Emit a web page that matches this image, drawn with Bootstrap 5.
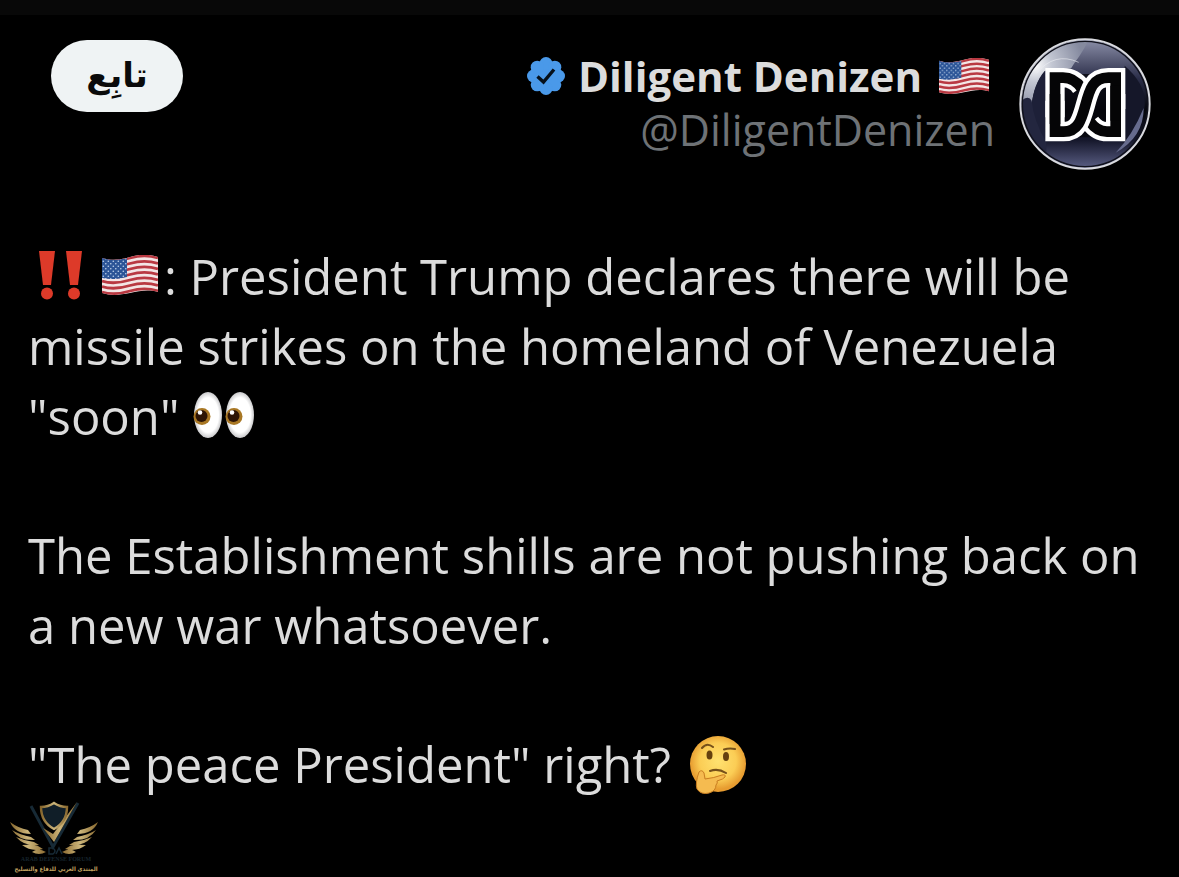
<!DOCTYPE html>
<html lang="en">
<head>
<meta charset="utf-8">
<meta name="viewport" content="width=device-width, initial-scale=1">
<title>Diligent Denizen</title>
<link href="https://cdn.jsdelivr.net/npm/bootstrap@5.3.0/dist/css/bootstrap.min.css" rel="stylesheet">
<style>
  body { background: #000; color: #dcdcdc; font-family: "Open Sans", "Noto Sans", sans-serif; }
  .top-strip { height: 15px; background: #080808; }
  .post-header { padding: 23px 28px 0 51px; }
  .follow-btn { width: 132px; height: 72px; margin-top: 2px; padding: 0 0 2px; border: 0; border-radius: 36px; background: #eff3f4; color: #0a0a0a; font: bold 34px/60px "DejaVu Sans", sans-serif; }
  .author { color: #dcdcdc; }
  .author-name { font-size: 42px; font-weight: 700; line-height: 54px; gap: 12px; padding-right: 6px; margin-top: 11px; }
  .author-handle { font-size: 43px; line-height: 54px; color: #6e7276; }
  .avatar { width: 132px; height: 132px; }
  .verified { width: 40px; height: 40px; }
  .flag-name { width: 50px; height: 36px; margin-left: 5px; }
  .post-body { padding: 71px 28px 0; font-size: 49px; line-height: 70px; }
  .post-body p { margin-bottom: 69px; }
  .post-body p:last-child { margin-bottom: 0; }
  .emo { display: inline-block; }
  .bangs { width: 46px; height: 50px; margin: 0 19px 0 9px; vertical-align: -5px; }
  .flag-text { width: 56px; height: 40px; vertical-align: 0; margin-right: 6px; }
  .eyes { width: 64px; height: 48px; vertical-align: -4px; }
  .think { width: 60px; height: 60px; margin-left: 4px; vertical-align: -12px; }
  .forum { width: 92px; margin-left: 10px; margin-top: 2px; }
  .forum-emblem { width: 92px; height: 54px; }
  .forum-en { font: bold 6px/8px "Liberation Serif", serif; color: #16242d; white-space: nowrap; }
  .forum-ar { font: bold 6px/12px "DejaVu Sans Condensed", "DejaVu Sans", sans-serif; color: #c4a562; white-space: nowrap; }
</style>
</head>
<body>
<svg class="position-absolute" width="0" height="0" aria-hidden="true">
  <defs>
    <pattern id="stars" width="5" height="5" patternUnits="userSpaceOnUse"><rect width="5" height="5" fill="#2c5597"/><circle cx="1.3" cy="1.3" r=".8" fill="#c3d5ec"/><circle cx="3.8" cy="3.8" r=".8" fill="#c3d5ec"/></pattern>
    <clipPath id="wave"><path d="M0 3C9 6 18 5 28 2S47-1 56 2V37C46 34 38 36 28 38S9 41 0 38Z"/></clipPath>
  </defs>
  <symbol id="us-flag" viewBox="0 0 56 40" preserveAspectRatio="none">
    <g clip-path="url(#wave)">
      <path d="M0-4H56V44H0Z" fill="#f3e5e5"/>
      <g fill="none" stroke="#b93942" stroke-width="2.8">
        <path d="M0 4C9 7 18 6 28 3S47 0 56 3"/><path d="M0 9.5C9 12.500 18 11.500 28 8.500S47 5.500 56 8.500"/><path d="M0 15C9 18 18 17 28 14S47 11 56 14"/><path d="M0 20.500C9 23.500 18 22.500 28 19.500S47 16.500 56 19.500"/><path d="M0 26C9 29 18 28 28 25S47 22 56 25"/><path d="M0 31.500C9 34.500 18 33.500 28 30.500S47 27.500 56 30.500"/><path d="M0 37C9 40 18 39 28 36S47 33 56 36"/>
      </g>
      <path d="M0 2C9 6 17 5 25 3V22C17 24 9 25 0 23Z" fill="url(#stars)"/>
    </g>
  </symbol>
</svg>

<div class="top-strip"></div>
<main>
  <header class="post-header d-flex align-items-start justify-content-between">
    <button type="button" class="follow-btn btn" lang="ar" dir="rtl">تابِع</button>
    <div class="author d-flex align-items-start gap-4">
      <div class="text-end">
        <div class="author-name d-flex align-items-center justify-content-end">
          <svg class="verified" viewBox="0 0 40 40" role="img" aria-label="Verified"><g fill="#4a99e9"><circle cx="20" cy="20" r="15"/><circle cx="20" cy="7.500" r="6.500"/><circle cx="28.800" cy="11.200" r="6.500"/><circle cx="32.500" cy="20" r="6.500"/><circle cx="28.800" cy="28.800" r="6.500"/><circle cx="20" cy="32.500" r="6.500"/><circle cx="11.200" cy="28.800" r="6.500"/><circle cx="7.500" cy="20" r="6.500"/><circle cx="11.200" cy="11.200" r="6.500"/></g><path d="M11.500 20.500L17.500 26L28 13.500" fill="none" stroke="#06101a" stroke-width="3.400"/></svg>
          <span>Diligent Denizen</span>
          <svg class="flag-name" role="img" aria-label="United States flag"><use href="#us-flag"/></svg>
        </div>
        <div class="author-handle">@DiligentDenizen</div>
      </div>
      <svg class="avatar" viewBox="28 22 396 396" role="img" aria-label="Avatar">
        <defs>
          <linearGradient id="orb" x1="0" y1="0" x2="0" y2="1"><stop offset="0" stop-color="#8b8fa8"/><stop offset=".3" stop-color="#2b2e49"/><stop offset=".55" stop-color="#05060c"/><stop offset=".78" stop-color="#15172b"/><stop offset="1" stop-color="#5b5f85"/></linearGradient>
          <radialGradient id="shine" cx=".22" cy=".4" r=".7"><stop offset="0" stop-color="#fff"/><stop offset=".35" stop-color="#c3c7d3"/><stop offset="1" stop-color="#858a9f"/></radialGradient>
          <clipPath id="disc"><circle cx="226" cy="220" r="191"/></clipPath>
        </defs>
        <circle cx="226" cy="220" r="193" fill="url(#orb)"/>
        <g clip-path="url(#disc)">
          <path d="M30 225C34 100 120 22 238 24C222 62 203 83 185 112L106 120C82 150 70 185 66 225Z" fill="url(#shine)"/>
          <path d="M66 225C70 180 82 148 106 120V345C80 315 66 275 66 225Z" fill="#1d2038"/>
          <path d="M30 215Q56 190 66 210Q72 270 110 335V380Q40 320 30 215" fill="#23263f"/>
          <path d="M345 105Q420 170 402 245Q380 330 345 340Z" fill="#151729"/>
          <path d="M402 232Q402 320 318 366Q368 315 402 232" fill="#666b8d"/>
          <path d="M80 128Q135 62 207 95" fill="none" stroke="#eceef4" stroke-width="3" opacity=".6"/>
        </g>
        <circle cx="226" cy="220" r="188" fill="none" stroke="#10111b" stroke-width="4"/>
        <circle cx="226" cy="220" r="194" fill="none" stroke="#d9dadf" stroke-width="6"/>
        <path d="M118 130H335V320H118Z" fill="#05060b" opacity=".75"/>
        <g fill="none" stroke-miterlimit="8">
          <path d="M136 260V141H160C184 141 200 150 214 170M318 190V303H292C270 303 255 293 242 275" stroke="#fff" stroke-width="58"/>
          <path d="M136 260V141H160C184 141 200 150 216 173M318 190V303H292C270 303 255 293 240 272" stroke="#050506" stroke-width="32"/>
          <path d="M136 210V303H162C205 303 215 268 227 224C240 175 250 141 296 141H318V235" stroke="#fff" stroke-width="58"/>
          <path d="M136 210V303H162C205 303 215 268 227 224C240 175 250 141 296 141H318V235" stroke="#050506" stroke-width="32"/>
          <path d="M136 190V280M318 165V270" stroke="#050506" stroke-width="32"/>
        </g>
      </svg>
    </div>
  </header>

  <article class="post-body">
    <p><svg class="emo bangs" viewBox="0 0 46 50" role="img" aria-label="Double exclamation"><g fill="#dd3a29"><path d="M2 1H18L14 35H6Z"/><circle cx="10" cy="43.500" r="6"/><path d="M29 1H45L41 35H33Z"/><circle cx="37" cy="43.500" r="6"/></g></svg><svg class="emo flag-text" role="img" aria-label="United States flag"><use href="#us-flag"/></svg>: President Trump declares there will be missile strikes on the homeland of Venezuela "soon" <svg class="emo eyes" viewBox="0 0 64 48" role="img" aria-label="Eyes">
      <defs><radialGradient id="white"><stop offset=".75" stop-color="#fff"/><stop offset="1" stop-color="#c9c9cb"/></radialGradient><g id="eye"><ellipse cx="16" cy="24" rx="14" ry="23" fill="url(#white)"/><circle cx="10" cy="25.500" r="8.500" fill="#a87724"/><circle cx="9.500" cy="25" r="6" fill="#2d1405"/><circle cx="8" cy="21.500" r="2.300" fill="#fff"/></g></defs>
      <use href="#eye"/><use href="#eye" x="32"/></svg></p>
    <p>The Establishment shills are not pushing back on a new war whatsoever.</p>
    <p>"The peace President" right? <svg class="emo think" viewBox="0 0 60 60" role="img" aria-label="Thinking face">
      <defs><radialGradient id="face" cx=".5" cy=".45"><stop offset="0" stop-color="#ffe170"/><stop offset=".65" stop-color="#fbcd55"/><stop offset="1" stop-color="#e79c30"/></radialGradient></defs>
      <circle cx="30" cy="29" r="28" fill="url(#face)"/>
      <g fill="#65400f"><ellipse cx="21.500" cy="20" rx="3" ry="4.500"/><ellipse cx="38" cy="21.500" rx="3" ry="4.500"/></g>
      <path d="M14 13Q19 7 25 12M36 14.500Q41 13 47 14M22 36Q30 33 38 38" fill="none" stroke="#76501a" stroke-width="2" stroke-linecap="round"/>
      <path d="M11 37Q14 34 16 38L17 44Q26 43 34 40Q38 39 37 42Q36 44 29 46Q30 48 28 50Q28 56 21 58Q13 60 9 54Q7 48 11 37Z" fill="#f5bb50" stroke="#c97d20" stroke-width="1"/></svg></p>
  </article>

  <footer class="forum d-flex flex-column align-items-center">
    <svg class="forum-emblem" viewBox="10 3 92 54" role="img" aria-label="DA">
      <defs><linearGradient id="gold"><stop offset="0" stop-color="#86662c"/><stop offset=".5" stop-color="#cdb67b"/><stop offset="1" stop-color="#8c6b31"/></linearGradient>
      <g id="wing" fill="url(#gold)"><path d="M10 24Q18 30 28 32L31 36Q15 36 10 24M12 32Q20 37 31 39L35 42Q19 43 12 32M16 39Q25 43 34 44L39 47Q25 49 16 39M22 47Q31 46 38 48L43 51Q31 54 22 47M32 54Q38 49 46 54Q39 58 32 54"/></g></defs>
      <path d="M31 8L53 49L78 5" fill="none" stroke="#172a36" stroke-width="3"/>
      <path d="M77 4L54 44L43 30L53 36Z" fill="url(#gold)"/>
      <path d="M54 5Q60 9 67 9Q67 24 54 31Q41 24 41 9Q48 9 54 5Z" fill="#101e28" stroke="url(#gold)" stroke-width="2.400"/>
      <use href="#wing"/><use href="#wing" transform="translate(108) scale(-1 1)"/>
      <path d="M49 50H53Q57 53 53 56H49ZM56 56L59 50L62 56" fill="none" stroke="#172a36" stroke-width="1.500"/>
    </svg>
    <div class="forum-en">ARAB DEFENSE FORUM</div>
    <div class="forum-ar" lang="ar" dir="rtl">المنتدى العربي للدفاع والتسليح</div>
  </footer>
</main>
<script src="https://cdn.jsdelivr.net/npm/bootstrap@5.3.0/dist/js/bootstrap.bundle.min.js"></script>
</body>
</html>
